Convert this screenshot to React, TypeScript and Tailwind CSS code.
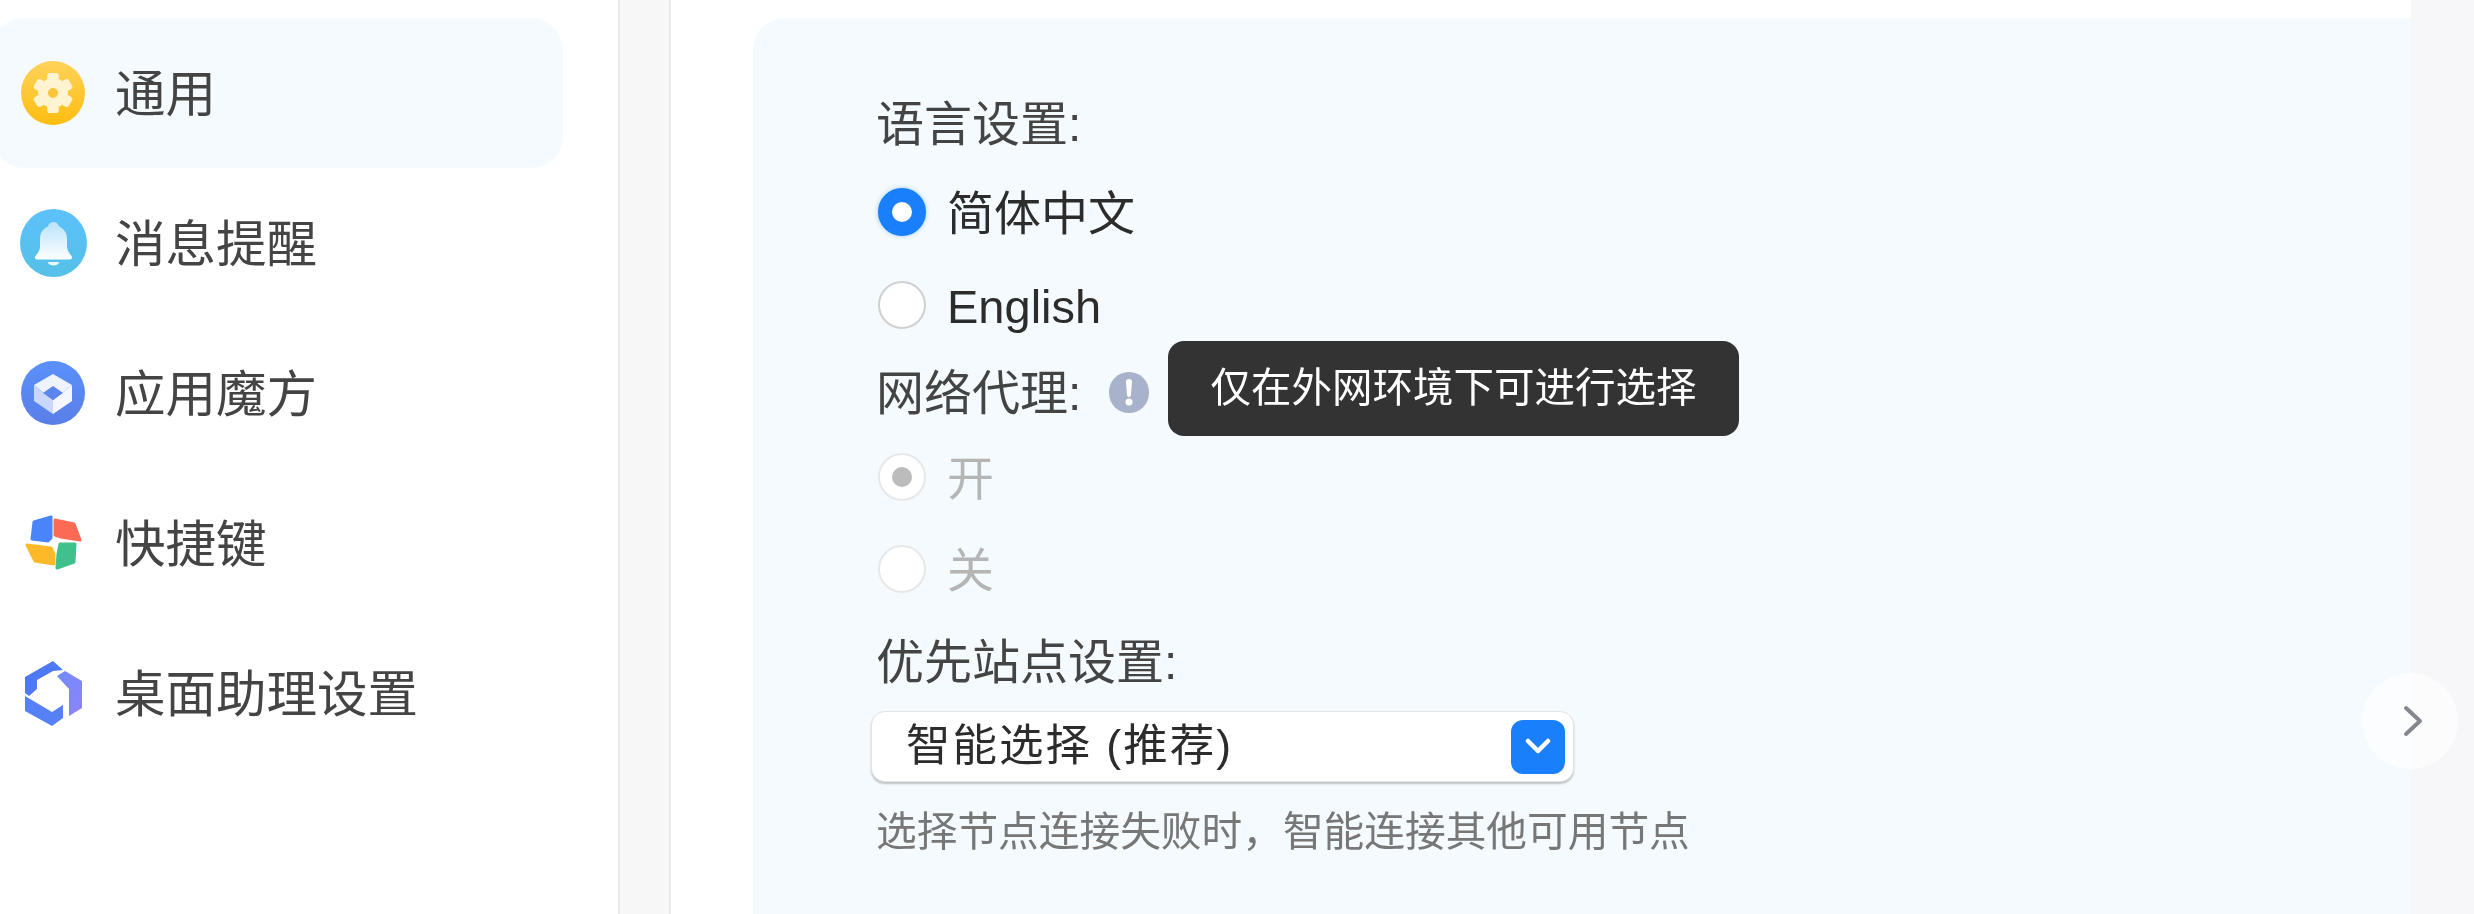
import React from 'react';

const GearIcon = () => (
  <svg width="64" height="64" viewBox="0 0 64 64" className="shrink-0">
    <defs>
      <linearGradient id="gearBg" x1="0" y1="0" x2="0" y2="1">
        <stop offset="0" stopColor="#ffd25a" />
        <stop offset="1" stopColor="#ffbd0f" />
      </linearGradient>
    </defs>
    <circle cx="32" cy="32" r="32" fill="url(#gearBg)" />
    <g fill="#fff3d0">
      {[0, 60, 120, 180, 240, 300].map((deg) => (
        <rect key={deg} x="26.5" y="12" width="11" height="40" rx="2.5" transform={`rotate(${deg} 32 32)`} />
      ))}
      <circle cx="32" cy="32" r="15" />
    </g>
    <circle cx="32" cy="32" r="5" fill="#fdc63a" />
  </svg>
);

const BellIcon = () => (
  <svg width="67" height="68" viewBox="0 0 67 68" className="shrink-0">
    <defs>
      <linearGradient id="bellBg" x1="0" y1="0" x2="0" y2="1">
        <stop offset="0" stopColor="#5cc1fb" />
        <stop offset="1" stopColor="#55c0e8" />
      </linearGradient>
      <linearGradient id="bellFg" x1="0" y1="0" x2="0" y2="1">
        <stop offset="0" stopColor="#b9e3fb" />
        <stop offset="1" stopColor="#ffffff" />
      </linearGradient>
    </defs>
    <ellipse cx="33.500" cy="34" rx="33.500" ry="34" fill="url(#bellBg)" />
    <path
      d="M33.500 13c3 0 5 2 5.500 4.500 5 2 8 6.500 8 12v8c0 4 2.500 7 4.500 9.500 1 1.500.5 3.500-1.500 3.500H17c-2 0-2.500-2-1.500-3.500 2-2.500 4.500-5.500 4.500-9.500v-8c0-5.500 3-10 8-12 .5-2.500 2.500-4.500 5.500-4.500z"
      fill="url(#bellFg)"
    />
    <path d="M27.500 53h12c-1 2.500-3.500 3.500-6 3.500s-5-1-6-3.500z" fill="#e8f6fd" />
  </svg>
);

const CubeIcon = () => (
  <svg width="64" height="64" viewBox="0 0 64 64" className="shrink-0">
    <defs>
      <linearGradient id="cubeBg" x1="0" y1="0" x2="0" y2="1">
        <stop offset="0" stopColor="#5a90fb" />
        <stop offset="1" stopColor="#5a7fe6" />
      </linearGradient>
    </defs>
    <circle cx="32" cy="32" r="32" fill="url(#cubeBg)" />
    <path d="M32 13l19 11-10 8-9-6-9 6-10-8z" fill="#eef3fe" />
    <path d="M13 24l10 8 9 7v14l-19-13z" fill="#c9d8fa" />
    <path d="M51 24l-10 8-9 7v14l19-13z" fill="#f4f7ff" />
    <path d="M32 25l10 7-10 7-10-7z" fill="#5b86ef" />
  </svg>
);

const PinwheelIcon = () => (
  <svg width="57" height="57" viewBox="0 0 57 57" className="-mt-[2px] shrink-0" strokeWidth="3" strokeLinejoin="round">
    <path d="M9 8L26 3L26 24L23 27L7 25Z" fill="#4a84fb" stroke="#4a84fb" />
    <path d="M30 6L49 10L55 26L36 23L30 21Z" fill="#fb6a55" stroke="#fb6a55" />
    <path d="M35 30L50 30L49 48L32 54L33 40Z" fill="#3fc08c" stroke="#3fc08c" />
    <path d="M2 31L26 34L29 40L29 50L10 47Z" fill="#fdb927" stroke="#fdb927" />
  </svg>
);

const AssistantIcon = () => (
  <svg width="57" height="65" viewBox="0 0 57 65" className="shrink-0">
    <defs>
      <linearGradient id="assistantSide" x1="0" y1="0" x2="1" y2="1">
        <stop offset="0" stopColor="#6f8dfa" />
        <stop offset="1" stopColor="#8f82fb" />
      </linearGradient>
    </defs>
    <path d="M38 9L28 0L0 16L0 32L4 35L12 28L12 19L28 10Z" fill="#4f78f4" />
    <path d="M32 15L40 10L57 20L57 47L44 55L44 28Z" fill="url(#assistantSide)" />
    <path d="M0 35L27 51L38 44L38 57L27 65L0 50Z" fill="#5580f6" />
  </svg>
);

const navItems = [
  { label: '通用', icon: <GearIcon />, active: true },
  { label: '消息提醒', icon: <BellIcon /> },
  { label: '应用魔方', icon: <CubeIcon /> },
  { label: '快捷键', icon: <PinwheelIcon /> },
  { label: '桌面助理设置', icon: <AssistantIcon /> },
];

const Radio = ({ label, checked, disabled, className }: { label: string; checked?: boolean; disabled?: boolean; className: string }) => (
  <div className={`flex h-16 items-center gap-[21px] pl-[2px] ${className}`}>
    {checked && !disabled ? (
      <span className="h-12 w-12 rounded-full border-[14px] border-[#1a7ffb] bg-white shadow-[0_0_4px_rgba(26,127,251,0.4)]" />
    ) : (
      <span
        className={`flex h-12 w-12 items-center justify-center rounded-full bg-white ${
          disabled ? 'border-2 border-[#e8e8e8]' : 'border-2 border-[#d0d0d0]'
        }`}
      >
        {checked && <span className="h-5 w-5 rounded-full bg-[#bcbcbc]" />}
      </span>
    )}
    <span className={`pt-[3px] text-[47px] leading-none ${disabled ? 'text-[#b5b5b5]' : 'text-[#2c2c2c]'}`}>{label}</span>
  </div>
);

const Label = ({ text, className, children }: { text: string; className?: string; children?: React.ReactNode }) => (
  <div className={`relative flex h-16 items-center text-[#444] ${className ?? ''}`}>
    <span className="pt-[3px] text-[48px] leading-none">{text}</span>
    {children}
  </div>
);

export default function App() {
  return (
    <div className="flex h-[914px] w-[2474px] overflow-hidden bg-white font-['Liberation_Sans','Noto_Sans_CJK_SC',sans-serif] blur-[0.6px]">
      <aside className="flex w-[618px] shrink-0 flex-col pt-[18px]">
        {navItems.map((item) => (
          <div
            key={item.label}
            className={`-ml-2 flex h-[150px] w-[571px] items-center rounded-[32px] pl-2 ${item.active ? 'bg-[#f4fafd]' : ''}`}
          >
            <div className="flex w-[106px] shrink-0 justify-center">{item.icon}</div>
            <span className="ml-[9px] pt-[4px] text-[50.500px] leading-none text-[#444]">{item.label}</span>
          </div>
        ))}
      </aside>

      <div className="w-[53px] shrink-0 border-x-2 border-[#e9e9ea] bg-[#f7f7f8]" />

      <main className="flex-1 pl-[82px] pt-[18px]">
        <section className="h-full rounded-tl-[32px] bg-[#f4fafd] pl-[123px] pt-[73px]">
          <Label text="语言设置:" />
          <Radio label="简体中文" checked className="mt-[25px]" />
          <Radio label="English" className="mt-[29px]" />
          <Label text="网络代理:" className="mt-[23px]">
            <span className="ml-[28px] flex h-[41px] w-[40px] items-center justify-center rounded-full bg-[#a9b2cb]">
              <svg width="8" height="27" viewBox="0 0 8 27" fill="white">
                <path d="M1 2.500a3 2.500 0 0 1 6 0L6 16a2 2 0 0 1-4 0z" />
                <circle cx="4" cy="23" r="3.500" />
              </svg>
            </span>
            <div className="absolute left-[292px] top-[-19px] flex h-[95px] w-[571px] items-center justify-center rounded-2xl bg-[#333333] text-[40.500px] text-white">
              仅在外网环境下可进行选择
            </div>
          </Label>
          <Radio label="开" checked disabled className="mt-[21px]" />
          <Radio label="关" disabled className="mt-[28px]" />
          <Label text="优先站点设置:" className="mt-[28px]" />
          <div className="mt-[18px] -ml-[5px] flex h-[71px] w-[703px] items-center justify-between rounded-[14px] border border-[#e4e4e4] bg-white pl-[34px] pr-[8px] shadow-[0_2px_2px_rgba(0,0,0,0.22)]">
            <span className="text-[44.500px] leading-none tracking-[2px] text-[#2c2c2c]">智能选择 (推荐)</span>
            <span className="flex h-[54px] w-[54px] items-center justify-center rounded-xl bg-[#1a7ffb]">
              <svg width="26" height="18" viewBox="0 0 26 18" fill="none" stroke="white" strokeWidth="4.500" strokeLinecap="round" strokeLinejoin="round">
                <path d="M3 3l10 10L23 3" />
              </svg>
            </span>
          </div>
          <p className="mt-[18px] flex h-16 items-center text-[40.700px] leading-none text-[#777]">
            {'选择节点连接失败时\uFF0C智能连接其他可用节点'}
          </p>
        </section>
      </main>

      <div className="relative w-[63px] shrink-0 bg-[#f7f7f9]">
        <button className="absolute left-[-49px] top-[673px] flex h-24 w-24 items-center justify-center rounded-full bg-white/60">
          <svg width="20" height="32" viewBox="0 0 20 32" fill="none" stroke="#85878f" strokeWidth="4" strokeLinecap="round" strokeLinejoin="round" className="ml-[6px]">
            <path d="M3 3l14 13L3 29" />
          </svg>
        </button>
      </div>
    </div>
  );
}
